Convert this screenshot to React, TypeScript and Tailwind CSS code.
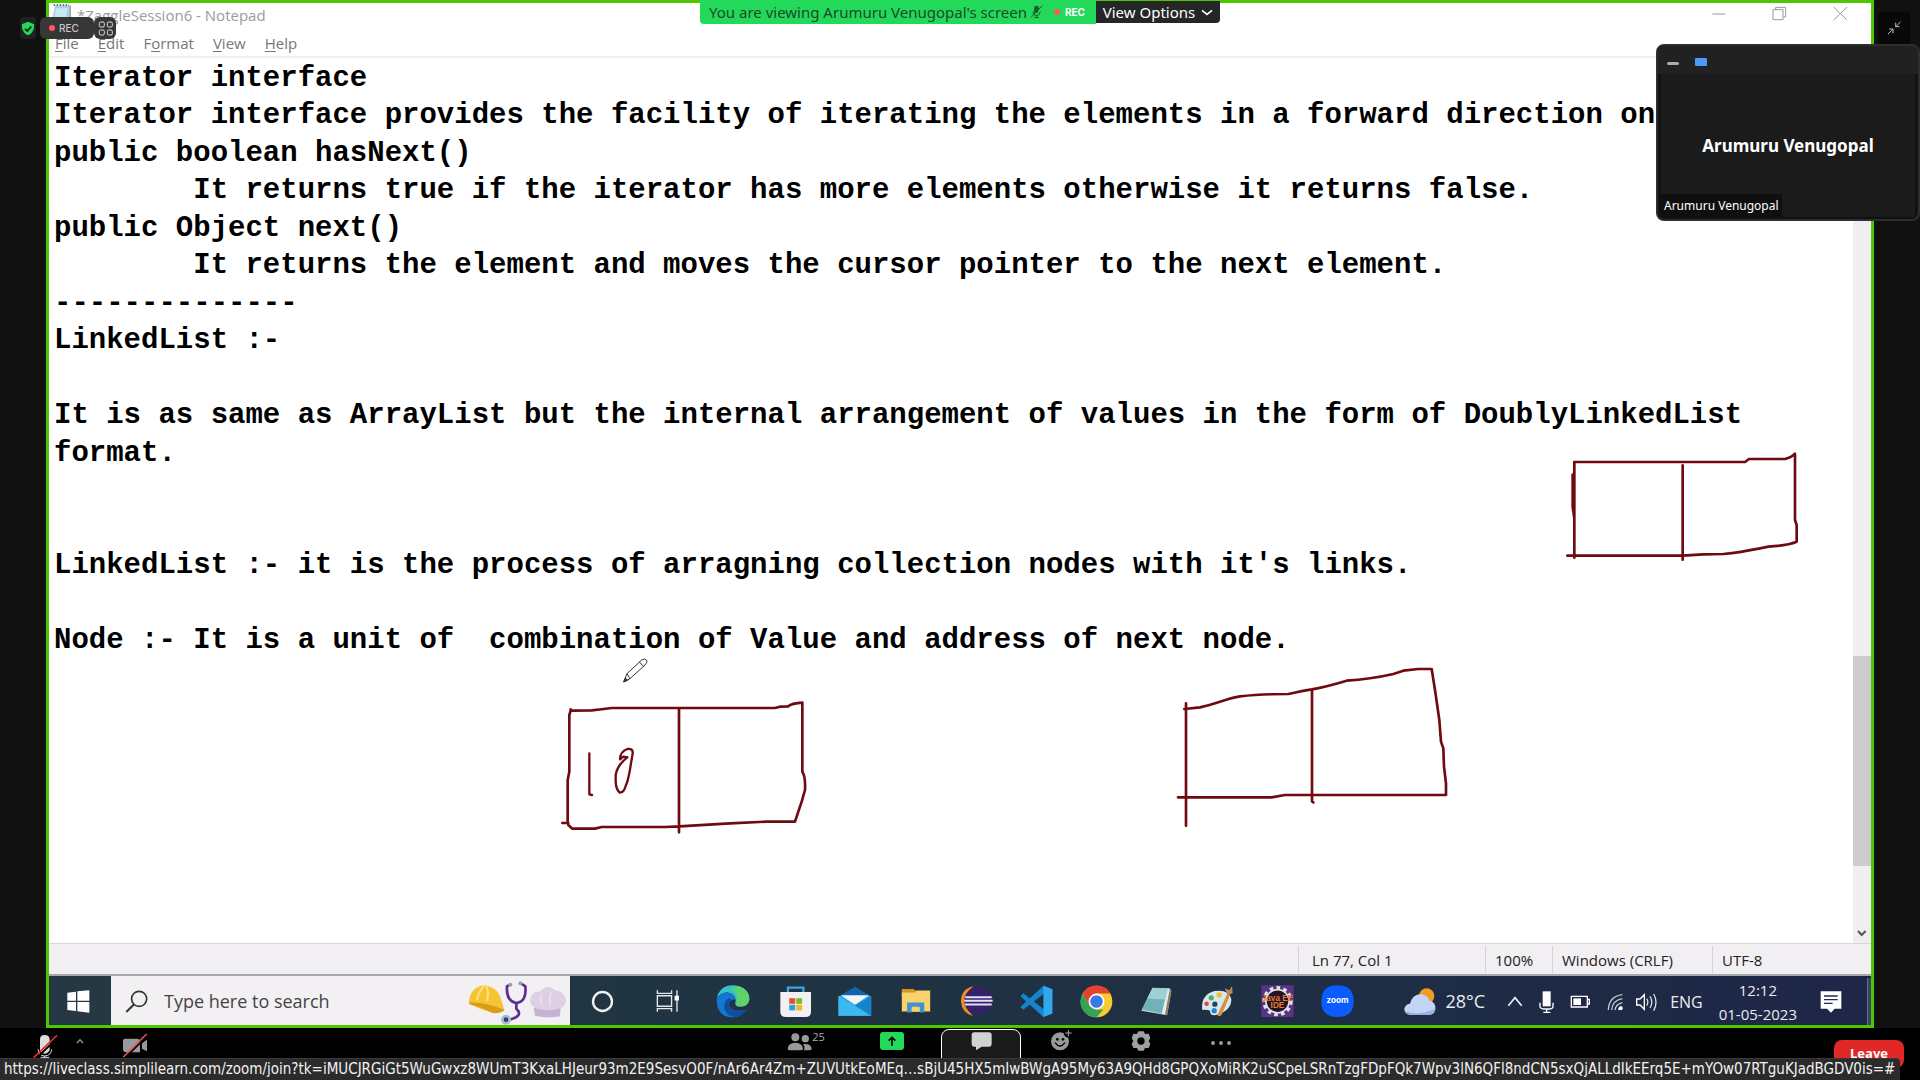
import type { ReactNode } from "react";

const lines = [
  "Iterator interface",
  "Iterator interface provides the facility of iterating the elements in a forward direction only.",
  "public boolean hasNext()",
  "        It returns true if the iterator has more elements otherwise it returns false.",
  "public Object next()",
  "        It returns the element and moves the cursor pointer to the next element.",
  "--------------",
  "LinkedList :-",
  "",
  "It is as same as ArrayList but the internal arrangement of values in the form of DoublyLinkedList",
  "format.",
  "",
  "",
  "LinkedList :- it is the process of arragning collection nodes with it's links.",
  "",
  "Node :- It is a unit of  combination of Value and address of next node.",
];

const statusUrl =
  "https://liveclass.simplilearn.com/zoom/join?tk=iMUCJRGiGt5WuGwxz8WUmT3KxaLHJeur93m2E9SesvO0F/nAr6Ar4Zm+ZUVUtkEoMEq…sBjU45HX5mIwBWgA95My63A9QHd8GPQXoMiRK2uSCpeLSRnTzgFDpFQk7Wpv3lN6QFl8ndCN5sxQjALLdIkEErq5E+mYOw07RTguKJadBGDV0is=#";

const menus = ["File", "Edit", "Format", "View", "Help"];
const accessKey: Record<string, number> = { File: 0, Edit: 0, Format: 1, View: 0, Help: 0 };

function Drawings() {
  return (
    <svg className="pointer-events-none absolute left-0 top-0" width="1804" height="885" viewBox="49 58 1804 885" fill="none" aria-hidden="true">
      <g stroke="#6f0a10" strokeWidth="8" strokeLinejoin="round" strokeLinecap="round">
        <g transform="translate(540 640) scale(.33333)">
          <path d="M92 208V212L155 211Q185 208 215 204H705L720 200L745 199Q755 190 787 188V395Q797 410 795 450L785 485L765 545H680L570 550L418 559L375 561H185L165 566H97L85 555L83 545V420L88 395V225L92 212M67 549H85M417 206V577" />
          <path d="M148 340V463L156 465M262 352L250 350L240 358Q240 335 262 327Q280 325 278 340L268 400L262 425L258 435Q252 458 240 458Q228 450 227 425V405Q232 375 262 352" strokeWidth="7" />
        </g>
        <g transform="translate(1160 650) scale(.33333)">
          <path d="M78 160V527M73 177L120 172Q150 165 180 155Q220 142 240 139Q300 132 385 132Q430 122 456 118Q500 110 560 92Q630 88 700 72L730 62L775 57H815L825 120L838 210L843 275L850 295L852 350L858 400V435H375L335 442H54M456 120V454L460 457" />
        </g>
        <g transform="translate(1550 440) scale(.33333)">
          <path d="M73 353V66H585L597 57H705Q725 52 735 41V240L740 255V305Q710 317 655 320L630 325Q570 337 520 342L460 343L398 347H52M398 76V359M73 235L68 200V104" />
        </g>
      </g>
      <g transform="translate(540 640) scale(.33333)" stroke="#333" strokeWidth="3">
        <path d="M251 126L261 101L305 60Q315 53 321 62Q322 68 315 75L270 116ZM261 101L270 116M298 66L311 79" fill="#fff" />
        <path d="M251 126L256 114L263 121Z" fill="#333" />
      </g>
    </svg>
  );
}

function Svg({ box, children }: { box: string; children: ReactNode }) {
  const [, , w, h] = box.split(" ").map(Number);
  return (
    <svg width={Math.round(w / 3)} height={Math.round(h / 3)} viewBox={box} fill="none" aria-hidden="true" className="shrink-0">
      {children}
    </svg>
  );
}

function SearchArt() {
  return (
    <Svg box="18 50 300 147">
      <path d="M24 127Q26 82 68 75Q112 80 121 120L130 148Q128 155 95 158Q60 148 24 130Z" fill="#f5c333" />
      <path d="M24 127Q70 125 130 148Q128 157 98 159Q60 140 24 131Z" fill="#d99d17" />
      <path d="M48 120Q52 92 70 76M78 122Q85 95 76 77" stroke="#ffe37a" strokeWidth="6" />
      <path d="M147 73L138 78Q135 122 165 128Q198 125 193 78L178 68M166 126V145Q188 165 150 177L137 178" stroke="#5c2e91" strokeWidth="8" />
      <circle cx="148" cy="73" r="6" fill="#8aa" />
      <circle cx="178" cy="69" r="6" fill="#8aa" />
      <circle cx="135" cy="178" r="15" fill="#a9bcd6" />
      <circle cx="135" cy="178" r="7" fill="#34435f" />
      <path d="M220 140Q202 132 210 108Q220 92 235 95Q258 68 282 90Q312 92 315 122Q310 142 298 144L296 168Q262 175 222 166Z" fill="#ddd0e6" />
      <path d="M218 142Q260 156 299 144L296 168Q262 175 222 166Z" fill="#c6b3d4" />
      <path d="M240 100Q236 118 244 134M270 95Q264 116 268 136" stroke="#e8dcee" strokeWidth="6" />
    </Svg>
  );
}

const apps: { name: string; icon: ReactNode }[] = [
  {
    name: "Microsoft Store",
    icon: (
      <Svg box="950 75 100 100">
        <path d="M977 103V83H1024V103" stroke="#35a7e8" strokeWidth="7" />
        <path d="M954 96H1047V155Q1047 172 1030 172H971Q954 172 954 155Z" fill="#f1f1f3" />
        <path d="M981 115H999V132H981Z" fill="#e2502b" />
        <path d="M1002 115H1020V132H1002Z" fill="#7db928" />
        <path d="M981 135H999V152H981Z" fill="#2aa2e2" />
        <path d="M1002 135H1020V152H1002Z" fill="#f4b71d" />
      </Svg>
    ),
  },
  {
    name: "Mail",
    icon: (
      <Svg box="1136 75 102 100">
        <path d="M1137 110L1187 80L1236 110Z" fill="#1462ae" />
        <path d="M1137 108H1236V168H1137Z" fill="#28a8e6" />
        <path d="M1144 106H1230L1187 135Z" fill="#f2f6f8" />
        <path d="M1137 108L1236 168H1137Z" fill="#3db8f1" />
        <path d="M1187 137L1236 108V168Z" fill="#1683cc" />
      </Svg>
    ),
  },
  {
    name: "File Explorer",
    icon: (
      <Svg box="3 75 96 100">
        <path d="M8 87H44L50 93H92V110H8Z" fill="#d9951c" />
        <path d="M8 98H50V92H94V155H8Z" fill="#f9d26b" />
        <path d="M24 158V128H76V158H62V141H38V158Z" fill="#4292d2" />
        <path d="M38 146H62V156H38Z" fill="#f9d26b" />
      </Svg>
    ),
  },
  {
    name: "Eclipse",
    icon: (
      <Svg box="181 74 100 100">
        <path d="M222 78Q184 86 184 124Q186 158 220 168Q192 140 200 112Q205 90 222 78Z" fill="#f08a27" />
        <circle cx="236" cy="122" r="42" fill="#33226b" />
        <path d="M197 111H277M194 122H280M196 133H277" stroke="#e4dff2" strokeWidth="6" />
      </Svg>
    ),
  },
  {
    name: "Visual Studio Code",
    icon: (
      <Svg box="363 74 100 100">
        <path d="M434 76L461 87V160L434 171L364 108L373 99L436 148V100L373 149L364 141Z" fill="#1484cf" />
        <path d="M434 76L461 87V160L434 171Z" fill="#33a7ee" />
      </Svg>
    ),
  },
  {
    name: "Google Chrome",
    icon: (
      <Svg box="544 74 100 100">
        <circle cx="594" cy="124" r="48" fill="#f9cb2d" />
        <path d="M552 100A48 48 0 0 1 636 100H594L573 136Z" fill="#e6412f" />
        <path d="M552 100L573 136L594 148H615L594 172A48 48 0 0 1 552 100Z" fill="#36a354" />
        <circle cx="594" cy="124" r="24" fill="#fff" />
        <circle cx="594" cy="124" r="19" fill="#3b78e7" />
      </Svg>
    ),
  },
  {
    name: "Notepad",
    icon: (
      <Svg box="722 74 100 100">
        <path d="M760 82L812 84L817 92L804 166L726 152Z" fill="#c5d5d8" />
        <path d="M760 83L806 86L788 160L728 148Z" fill="#6fb2b8" />
        <path d="M760 83L806 86L798 118L744 115Z" fill="#9fd0d2" />
        <path d="M806 86L812 90L798 163L788 160Z" fill="#e6edee" />
        <path d="M812 88L817 92L804 166L798 163Z" fill="#8c7f60" />
      </Svg>
    ),
  },
  {
    name: "Paint",
    icon: (
      <Svg box="904 74 100 100">
        <path d="M908 150Q902 104 945 92Q990 86 996 118Q996 152 950 165Q930 168 932 152Q920 148 908 150Z" fill="#d6e9f2" />
        <circle cx="935" cy="113" r="8" fill="#57b04b" />
        <circle cx="959" cy="104" r="8" fill="#f2c22d" />
        <circle cx="921" cy="131" r="7" fill="#e24a3a" />
        <circle cx="946" cy="132" r="8" fill="#26435a" />
        <circle cx="944" cy="152" r="8" fill="#2d7ed0" />
        <path d="M984 100L992 105L966 166Q956 172 954 164Z" fill="#e08b3d" />
        <path d="M976 84L990 90L998 77L1000 98L985 106Z" fill="#b88a5a" />
      </Svg>
    ),
  },
  {
    name: "Java EE IDE",
    icon: (
      <Svg box="1086 74 100 100">
        <path d="M1087 75H1185V171H1087Z" fill="#5a3484" />
        <circle cx="1136" cy="123" r="41" stroke="#e5e0e8" strokeWidth="10" strokeDasharray="11 10" />
        <circle cx="1136" cy="123" r="35" fill="#241426" stroke="#e5e0e8" strokeWidth="5" />
        <text x="1136" y="121" textAnchor="middle" fontFamily="Liberation Sans" fontWeight="700" fontSize="25" fill="#e37b2c">Java EE</text>
        <text x="1136" y="144" textAnchor="middle" fontFamily="Liberation Sans" fontWeight="700" fontSize="25" fill="#e37b2c">IDE</text>
      </Svg>
    ),
  },
  {
    name: "Zoom",
    icon: (
      <Svg box="1266 74 100 100">
        <path d="M1316 75Q1365 75 1365 123Q1365 171 1316 171Q1267 171 1267 123Q1267 75 1316 75Z" fill="#0b5cff" />
        <text x="1316" y="130" textAnchor="middle" fontFamily="Inter" fontWeight="700" fontSize="25" fill="#fff">zoom</text>
      </Svg>
    ),
  },
];

function Taskbar() {
  return (
    <div className="flex h-[51px] shrink-0 items-stretch border-t-2 border-[#a3a9ad] bg-gradient-to-r from-[#253843] via-[#1f3242] to-[#1e2647] text-[#e8edf2]">
      <button aria-label="Start" className="flex w-[62px] items-center justify-center pr-[4px] pt-[2px]">
        <Svg box="200 89 69 69">
          <path d="M201 97L227 94V121H201ZM231 93L267 90V121H231ZM201 125H227V152L201 149ZM231 125H267V157L231 153Z" fill="#fff" />
        </Svg>
      </button>
      <label className="flex w-[459px] items-center bg-[#f2f0f3] pl-[14px] pr-[3px] pt-[2px]">
        <Svg box="376 88 70 70">
          <circle cx="419" cy="115" r="23" stroke="#333" strokeWidth="5" />
          <path d="M403 132L380 155" stroke="#333" strokeWidth="6" />
        </Svg>
        <input aria-label="Search" placeholder="Type here to search" className="ml-[16px] w-0 min-w-0 flex-1 bg-transparent text-[18px] outline-none placeholder:text-[#444]" />
        <SearchArt />
      </label>
      <div className="flex pt-[2px]">
        <button aria-label="Cortana" className="flex w-[65px] items-center justify-center">
          <Svg box="394 90 68 68">
            <circle cx="428" cy="124" r="28" stroke="#eef2f4" strokeWidth="7" />
          </Svg>
        </button>
        <button aria-label="Task View" className="flex w-[65px] items-center justify-center">
          <Svg box="586 89 68 68">
            <path d="M590 90V99H632V90M590 153V144H632V153M590 106H632V137H590ZM648 90V153" stroke="#e3e8eb" strokeWidth="4" />
            <path d="M641 106H655V120H641Z" fill="#fff" />
          </Svg>
        </button>
        <button aria-label="Microsoft Edge" className="flex w-[65px] items-center justify-center">
          <Svg box="767 74 102 102">
            <path d="M769 115Q778 74 820 75Q868 80 867 118Q862 142 830 138Q822 134 826 122Q825 100 800 96Q778 98 769 115Z" fill="#35c1c8" />
            <path d="M835 78Q867 88 867 118Q862 142 832 138Q824 134 830 122Q834 98 812 86Z" fill="#5fd36a" />
            <path d="M769 115Q780 94 803 97Q825 102 826 118Q806 116 806 134Q812 158 858 148Q842 172 812 171Q768 166 769 115Z" fill="#1478d2" />
            <path d="M806 112Q788 122 792 145Q800 168 825 170Q848 166 858 148Q812 158 806 134Q804 125 812 118Z" fill="#0c4fa0" />
          </Svg>
        </button>
      </div>
      <div className="flex w-[603px] pt-[2px]">
        {apps.map((a) => (
          <button key={a.name} aria-label={a.name} className="flex flex-1 items-center justify-center">
            {a.icon}
          </button>
        ))}
      </div>
      <div className="ml-auto flex items-center pt-[2px]">
        <button className="flex items-center gap-[10px] text-[18px]">
          <Svg box="92 174 96 90">
            <circle cx="160" cy="201" r="23" fill="#f39a1f" />
            <path d="M112 258Q92 256 93 238Q98 224 110 224Q118 194 146 196Q164 200 168 214Q188 220 186 240Q184 256 168 258Z" fill="#c3d4f4" />
            <path d="M96 246Q130 262 186 240Q184 256 168 258H112Q98 256 96 246Z" fill="#94b2e6" />
          </Svg>
          28°C
        </button>
        <div className="ml-[22px] flex items-center gap-4">
          <Svg box="394 192 48 48">
            <path d="M398 227L418 203L438 227" stroke="#e8edf2" strokeWidth="5" />
          </Svg>
          <Svg box="486 180 45 66">
            <path d="M497 181H521V226H497Z" fill="#fff" />
            <path d="M489 215V228Q492 234 500 234H518Q526 234 528 228V215M509 234V244M499 244H520" stroke="#fff" strokeWidth="4" />
          </Svg>
          <Svg box="572 190 63 54">
            <path d="M576 200H624V232H576ZM624 209H630V223H624" stroke="#fff" strokeWidth="4" />
            <path d="M582 206H605V226H582Z" fill="#fff" />
          </Svg>
          <Svg box="672 190 51 54">
            <path d="M676 241Q678 200 718 195M686 241Q688 212 718 207M696 241Q698 224 718 219M706 241Q708 234 718 231" stroke="#c5cbd5" strokeWidth="4" />
            <circle cx="713" cy="236" r="6" fill="#fff" />
          </Svg>
        </div>
        <div className="ml-[11px] flex items-center gap-3">
          <Svg box="750 184 69 60">
            <path d="M755 205H765L778 192V236L765 223H755Z" stroke="#fff" strokeWidth="4" />
            <path d="M785 204Q792 214 785 225M795 197Q806 214 795 232M806 190Q820 214 806 240" stroke="#d6dae2" strokeWidth="4" />
          </Svg>
          <span className="text-[16px]">ENG</span>
        </div>
        <div className="ml-[16px] text-center text-[15px] leading-6">
          <div>12:12</div>
          <div>01-05-2023</div>
        </div>
        <button aria-label="Notifications" className="ml-[23px] mr-[25px]">
          <Svg box="1279 180 66 66">
            <path d="M1281 181H1343V233H1323L1312 245L1300 233H1281Z" fill="#fff" />
            <path d="M1291 195H1332M1291 206H1332M1291 217H1317" stroke="#222b4a" strokeWidth="4" />
          </Svg>
        </button>
        <span className="h-[47px] w-[4px] border-l border-[#67708a] bg-[#3a4362]" />
      </div>
    </div>
  );
}

function Notepad() {
  return (
    <section className="flex flex-1 flex-col bg-white font-['Open_Sans',sans-serif]">
      <header className="flex h-[28px] items-start text-[#9b9b9b]">
        <span className="ml-[2px] flex">
          <Svg box="152 10 60 66">
            <path d="M165 16H210V70H152Z" fill="#a9d3e2" />
            <path d="M168 26H202L196 60H160Z" fill="#c9e9f3" />
            <path d="M160 16H206" stroke="#777" strokeWidth="6" strokeDasharray="4 5" />
            <path d="M210 18V72" stroke="#a9a08c" strokeWidth="4" />
          </Svg>
        </span>
        <h1 className="ml-[6px] text-[15px] leading-[25px]">*ZaggleSession6 - Notepad</h1>
        <div className="ml-auto mr-[23px] flex items-center gap-[46px] pt-[3px]">
          <button aria-label="Minimize">
            <Svg box="216 18 42 45"><path d="M217 42H256" stroke="#999" strokeWidth="3" /></Svg>
          </button>
          <button aria-label="Restore">
            <Svg box="395 18 45 45"><path d="M398 29H428V59H398ZM406 28V22H436V51H429" stroke="#999" strokeWidth="3" /></Svg>
          </button>
          <button aria-label="Close">
            <Svg box="580 18 45 45"><path d="M582 21L622 60M622 21L582 60" stroke="#999" strokeWidth="3" /></Svg>
          </button>
        </div>
      </header>
      <nav className="flex h-[27px] items-center gap-[19px] border-b-2 border-[#efefef] pl-[6px] text-[15px] text-[#777]">
        {menus.map((m) => (
          <button key={m}>
            {m.slice(0, accessKey[m])}
            <u className="underline-offset-2">{m[accessKey[m]]}</u>
            {m.slice(accessKey[m] + 1)}
          </button>
        ))}
      </nav>
      <div className="flex flex-1">
        <div className="relative flex-1 overflow-hidden pl-[5px] pt-[2px]">
          <div className="grid h-[600px] auto-rows-fr items-center whitespace-pre font-['Liberation_Mono',monospace] text-[29px] font-bold leading-8 text-black">
            {lines.map((l, i) => (
              <div key={i}>{l}</div>
            ))}
          </div>
          <Drawings />
        </div>
        <div className="flex w-[18px] flex-col bg-[#f0eef1]">
          <div className="flex-[598]" />
          <div className="flex-[210] bg-[#cdcbce]" />
          <div className="flex flex-[77] items-end justify-center">
            <span className="mb-[5px]">
              <Svg box="1390 0 30 24"><path d="M1393 3L1404 15L1416 3" stroke="#555" strokeWidth="6" /></Svg>
            </span>
          </div>
        </div>
      </div>
      <footer className="flex h-[31px] shrink-0 items-center justify-end border-t border-[#d8d6d8] bg-[#f1eff1] text-[15px] text-[#222]">
        <span className="h-[27px] w-[187px] border-l border-[#d5d3d5] pl-[13px] leading-[28px]">Ln 77, Col 1</span>
        <span className="h-[27px] w-[67px] border-l border-[#d5d3d5] pl-[9px] leading-[28px]">100%</span>
        <span className="h-[27px] w-[160px] border-l border-[#d5d3d5] pl-[9px] leading-[28px]">Windows (CRLF)</span>
        <span className="h-[27px] w-[159px] border-l border-[#d5d3d5] pl-[9px] leading-[28px]">UTF-8</span>
      </footer>
      <Taskbar />
    </section>
  );
}

function ShareBanner() {
  return (
    <div className="absolute left-[700px] top-0 flex items-start text-[15px]">
      <div className="flex h-[24px] w-[396px] items-center rounded-bl bg-[#23d959] pl-[9px] text-[#1b4a2b]">
        <span className="whitespace-nowrap">You are viewing Arumuru Venugopal's screen</span>
        <span className="ml-auto mr-[11px]">
          <Svg box="976 16 39 42">
            <path d="M988 25Q988 18 996 18Q1004 18 1003 28L998 40H988Z" fill="#14612c" />
            <path d="M984 36Q986 48 996 48Q1006 46 1007 36M996 48V54M989 54H1003" stroke="#14612c" strokeWidth="3" />
            <path d="M979 53L1013 18" stroke="#14612c" strokeWidth="3" />
          </Svg>
        </span>
        <span className="size-[6px] rounded-full bg-[#ff5a50]" />
        <span className="ml-[5px] mr-[11px] font-['Inter',sans-serif] text-[10px] font-bold text-white">REC</span>
      </div>
      <button className="mt-px flex h-[22px] w-[124px] items-center justify-center gap-[6px] whitespace-nowrap rounded-br bg-[#242628] text-white">
        View Options
        <Svg box="1455 24 36 27"><path d="M1458 31L1473 43L1488 31" stroke="#fff" strokeWidth="5" /></Svg>
      </button>
    </div>
  );
}

function RecordingBadges() {
  return (
    <div className="absolute left-[20px] top-[17px] flex h-[22px]">
      <span className="flex w-[16px] items-center justify-center rounded bg-[#202122]">
        <Svg box="63 58 42 46">
          <path d="M84 60L103 68Q104 94 84 102Q64 94 65 68Z" fill="#23d959" />
          <path d="M75 82L82 89L94 75" stroke="#111" strokeWidth="5" />
        </Svg>
      </span>
      <span className="ml-[4px] flex w-[54px] items-center gap-[4px] rounded-md bg-[#373737] pl-[9px] font-['Inter',sans-serif] text-[10px] font-medium text-[#c8c8c8]">
        <span className="size-[6px] rounded-full bg-[#ff5a50]" />
        REC
      </span>
      <button aria-label="Apps" className="flex w-[22px] items-center justify-center rounded-md bg-[#373737]">
        <Svg box="292 61 45 45">
          <path d="M300 64H307Q311 64 311 68V75Q311 79 307 79H300Q296 79 296 75V68Q296 64 300 64ZM324 64H331Q335 64 335 68V75Q335 79 331 79H324Q320 79 320 75V68Q320 64 324 64ZM300 88H307Q311 88 311 92V99Q311 103 307 103H300Q296 103 296 99V92Q296 88 300 88ZM324 88H331Q335 88 335 92V99Q335 103 331 103H324Q320 103 320 99V92Q320 88 324 88Z" stroke="#ddd" strokeWidth="3" />
        </Svg>
      </button>
    </div>
  );
}

function SpeakerWindow() {
  return (
    <aside className="absolute right-0 top-[44px] flex h-[177px] w-[264px] flex-col overflow-hidden rounded-lg border-2 border-[#2e2e2e] bg-[#111]">
      <div className="flex h-[28px] shrink-0 items-center gap-[16px] rounded-t-md bg-[#212121] pl-[9px]">
        <button aria-label="Minimize video" className="mt-[6px] h-[3px] w-[12px] rounded-sm bg-[#ababab]" />
        <button aria-label="Speaker view" className="mt-[4px] h-[8px] w-[12px] rounded-[1px] bg-[#4d9bf8]" />
      </div>
      <div className="relative mx-[3px] mb-[2px] flex flex-1 items-center justify-center bg-[#1b1b1b] text-white">
        <span className="text-[17px] font-bold">Arumuru Venugopal</span>
        <span className="absolute bottom-0 left-0 whitespace-nowrap bg-[#0f0f0f] px-[3px] text-[12px] leading-[23px]">Arumuru Venugopal</span>
      </div>
    </aside>
  );
}

function ZoomToolbar() {
  return (
    <div className="relative flex h-[52px] shrink-0 items-start bg-black font-['Open_Sans',sans-serif]">
      <div className="flex w-[763px] items-start pl-[33px]">
        <button aria-label="Unmute" className="mt-[6px]">
          <Svg box="99 222 75 75">
            <path d="M120 238Q120 225 134 225Q148 225 149 238V268Q147 280 134 281Q121 280 120 268Z" fill="#ddd" />
            <path d="M114 268Q116 287 134 288Q153 287 155 268M134 288V294M122 292H148" stroke="#ddd" strokeWidth="3" />
            <path d="M107 296L176 231" stroke="#000" strokeWidth="6" />
            <path d="M101 293L171 226" stroke="#e02b2b" strokeWidth="5" />
          </Svg>
        </button>
        <button aria-label="Audio options" className="ml-[17px] mt-[10px]">
          <Svg box="225 234 30 24"><path d="M231 249L240 239L249 249" stroke="#999" strokeWidth="4" /></Svg>
        </button>
        <button aria-label="Start video" className="ml-[37px] mt-[5px]">
          <Svg box="366 218 78 75">
            <path d="M375 235H411Q420 235 420 244V276H378Q369 276 369 267V241Q369 235 375 235ZM426 249L441 238V273L426 265Z" fill="#999" />
            <path d="M376 291L443 226" stroke="#000" strokeWidth="5" />
            <path d="M370 290L440 221" stroke="#e95252" strokeWidth="5" />
          </Svg>
        </button>
      </div>
      <button aria-label="Participants, 25" className="flex w-[86px] items-start justify-center pt-[4px]">
        <Svg box="979 215 75 60">
          <circle cx="1004" cy="231" r="12" fill="#999" />
          <circle cx="1034" cy="235" r="11" fill="#999" />
          <path d="M981 265Q982 248 1004 247Q1026 248 1027 265Q1027 270 1020 270H988Q981 270 981 265ZM1027 252Q1050 248 1053 265Q1053 270 1046 270H1030Q1034 260 1027 252Z" fill="#999" />
        </Svg>
        <span className="text-[11px] leading-[10px] text-[#aaa]">25</span>
      </button>
      <button aria-label="Share screen" className="flex w-[86px] justify-center pt-[4px]">
        <span className="flex h-[18px] w-[24px] items-center justify-center rounded-[3px] bg-[#23d959]">
          <Svg box="1281 228 30 33"><path d="M1296 257V233M1286 242L1296 232L1306 242" stroke="#000" strokeWidth="5" /></Svg>
        </span>
      </button>
      <button aria-label="Chat" className="ml-[6px] mt-px flex h-[51px] w-[80px] justify-center rounded-t-lg border border-white bg-[#1a1a1a] pt-[2px]">
        <Svg box="211 215 63 57"><path d="M221 216H265Q273 216 273 224V250Q273 259 265 259H243L226 270V259H221Q213 259 213 250V224Q213 216 221 216Z" fill="#d2d2d2" /></Svg>
      </button>
      <button aria-label="Reactions" className="flex w-[80px] justify-center pt-px">
        <Svg box="453 206 69 66">
          <circle cx="483" cy="243" r="27" fill="#999" />
          <circle cx="508" cy="218" r="14" fill="#000" />
          <circle cx="475" cy="237" r="4" fill="#000" />
          <circle cx="492" cy="237" r="4" fill="#000" />
          <path d="M468 247Q483 267 498 247" stroke="#000" strokeWidth="4" />
          <path d="M508 209V228M499 218H518" stroke="#aaa" strokeWidth="3" />
        </Svg>
      </button>
      <button aria-label="Settings" className="flex w-[80px] justify-center pt-[3px]">
        <Svg box="693 213 60 60">
          <path d="M715 214H731L735 222L746 221L751 234L746 243L751 252L746 264L735 264L731 272H715L711 264L700 264L695 252L700 243L695 234L700 221L711 222Z" fill="#a0a0a0" />
          <circle cx="723" cy="243" r="11" fill="#000" />
        </Svg>
      </button>
      <button aria-label="More" className="flex w-[80px] justify-center pt-[11px]">
        <Svg box="930 237 66 24">
          <circle cx="939" cy="249" r="6" fill="#999" />
          <circle cx="963" cy="249" r="6" fill="#999" />
          <circle cx="987" cy="249" r="6" fill="#999" />
        </Svg>
      </button>
      <button className="ml-auto mr-[16px] mt-[12px] h-[28px] w-[70px] rounded-lg bg-[#e02828] text-[13px] font-bold text-white">Leave</button>
      <a href="#" className="absolute bottom-0 left-0 h-[22px] whitespace-nowrap rounded-tr border-t border-[#3a3a3a] bg-[#2b2b2b] pl-[4px] pr-[5px] font-['DejaVu_Sans_Condensed',sans-serif] text-[15px] leading-[21px] text-[#f2f2f2]">
        {statusUrl}
      </a>
    </div>
  );
}

export default function App() {
  return (
    <main className="relative flex min-h-screen flex-col bg-[#111] font-['Noto_Sans',sans-serif]">
      <div className="flex flex-1 pl-[46px] pr-[46px]">
        <div className="flex flex-1 flex-col border-[3px] border-[#4cc800]">
          <Notepad />
        </div>
      </div>
      <ZoomToolbar />
      <RecordingBadges />
      <ShareBanner />
      <button aria-label="Exit full screen" className="absolute right-[10px] top-[12px] flex size-[32px] items-center justify-center rounded bg-[#070909]">
        <Svg box="740 60 45 45">
          <path d="M781 62L766 77M766 65V77H778M743 99L758 84M746 84H758V97" stroke="#bbb" strokeWidth="3" />
        </Svg>
      </button>
      <SpeakerWindow />
    </main>
  );
}
